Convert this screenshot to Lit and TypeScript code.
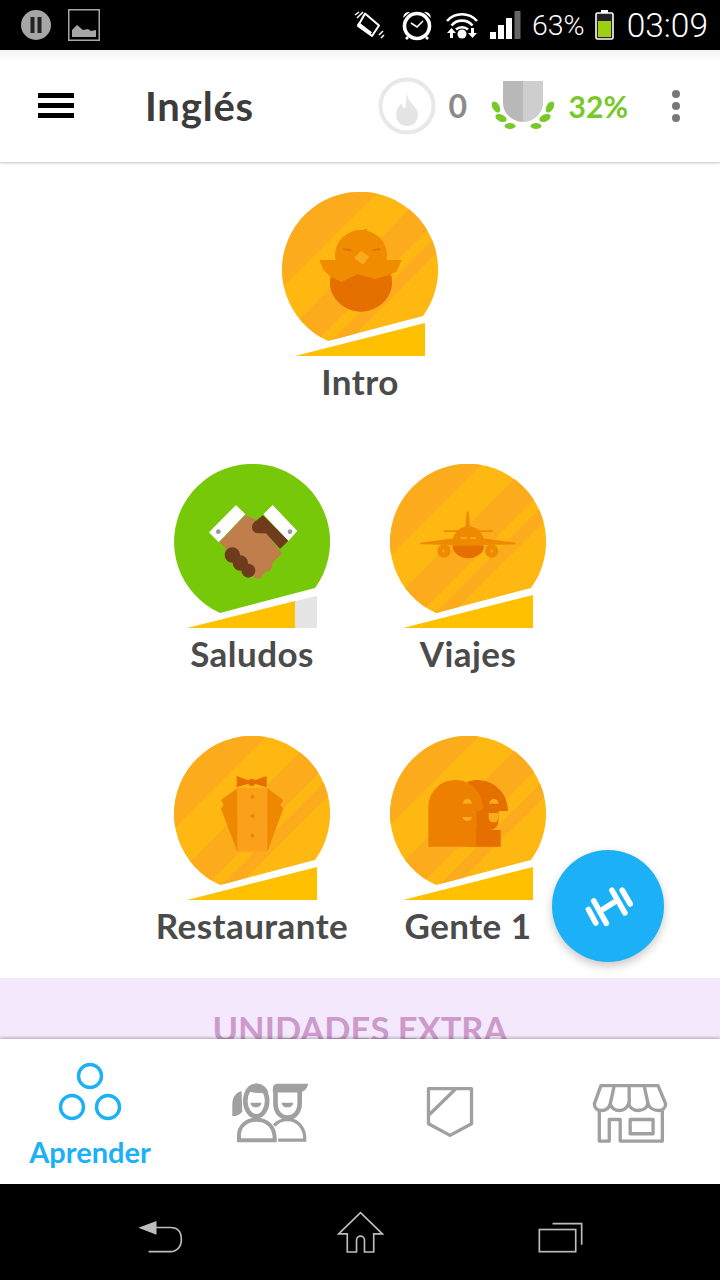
import { LitElement, html, svg, css } from "lit";
import { customElement, property } from "lit/decorators.js";

// icon drawings use the coordinates of a 3x crop, scaled down by the group transform
const chick = svg`<g transform="scale(.3333) translate(-66 -36)">
  <g fill="#f08c00">
    <path d="M288 148l12 8 20-11 2 18h-36z"/>
    <ellipse cx="303" cy="225" rx="78" ry="75"/>
    <path d="M178 240H425L410 275L393 283L345 297L293 283L245 305L212 290L190 270Z"/>
  </g>
  <path fill="#e56f00" d="M212 290l33 15 48-22 52 14 48-14c3 10 3 18 3 27 0 44-42 85-93 85s-93-41-93-85c0-7 0-13 2-20z"/>
  <path fill="#fba91f" d="M303 212l24 18-18 24-26-20z"/>
  <path fill="#e56f00" d="M250 204l24 4v6l-24-3zM362 204l-24 4v6l24-3z"/>
</g>`;

const handshake = svg`<g transform="scale(.3333) translate(-42 -27)">
  <path fill="#fff" d="M147 232l81-82 28 28-80 84zM310 178l28-28 74 78-27 30z"/>
  <circle cx="175" cy="230" r="7" fill="#999"/><circle cx="390" cy="230" r="7" fill="#999"/>
  <path fill="#bf7e4b" d="M178 262l78-82 34 16 76 100-26 24-8 26-16 6-16 20-16-4-60-62z"/>
  <path fill="#6f3b1d" d="M309 181l76 76-25 25-42-47h-24a18 18 0 0 1-18-18c0-8 4-14 10-18z"/>
  <circle cx="217" cy="300" r="23" fill="#6f3b1d"/><circle cx="241" cy="324" r="23" fill="#6f3b1d"/><circle cx="265" cy="347" r="21" fill="#6f3b1d"/>
</g>`;

const plane = svg`<g transform="scale(.3333) translate(-45 -27)">
  <g fill="#ee8a00">
    <path d="M275 170h6l4 48h-14z"/>
    <path d="M207 226h146v5H207z"/>
    <path d="M135 263l103-13h84l100 13v5l-102 2h-80l-105-2z"/>
    <circle cx="207" cy="288" r="20"/><circle cx="350" cy="288" r="20"/>
    <circle cx="280" cy="261" r="47"/>
  </g>
  <path fill="#e56f00" d="M233 272h94a47 38 0 0 1-94 0z"/>
  <path fill="#fba91f" d="M257 247h18v5h-18zM285 247h18v5h-18zM200 288l8-6v12zM356 288l-8-6v12z"/>
</g>`;

const tuxedo = svg`<g transform="scale(.3333) translate(-42 -33)">
  <rect x="232" y="188" width="90" height="192" fill="#fba01b"/>
  <path fill="#ee8800" d="M232 190l-49 35 8 14-8 12 49 129zM322 190l48 35-9 14 9 12-48 129z"/>
  <path fill="#e56f00" d="M230 153l40 14h10l40-14v34l-40-12h-10l-40 12z"/>
  <circle cx="275" cy="172" r="11" fill="#e56f00"/>
  <circle cx="277" cy="215" r="6" fill="#ee8800"/><circle cx="277" cy="273" r="6" fill="#ee8800"/><circle cx="277" cy="332" r="6" fill="#ee8800"/>
</g>`;

const people = svg`<g transform="scale(.3333) translate(-30 -33)">
  <path fill="#e56f00" d="M262 170c14-5 26-6 36-5 50 4 86 44 86 93h-28v25c0 18-8 30-22 32h28v50h-100z"/>
  <path fill="#ee8000" d="M145 365V250c0-50 36-85 80-85 46 0 80 32 85 85l-20 16v44h-2v55z"/>
  <path fill="#fba91f" d="M248 236a14 14 0 0 1 28 0zM328 236a14 14 0 0 1 28 0zM248 276h28a14 12 0 0 1-28 0zM326 264h30v16a15 12 0 0 1-30 0z"/>
  <path fill="#e56f00" d="M290 258h18l-18 32z"/>
</g>`;

interface Skill {
  name: string;
  icon: unknown;
  bg?: string;
  bands: [number, number][];
  done?: boolean;
}

const rows: Skill[][] = [
  [{ name: "Intro", icon: chick, bands: [[-10, 96], [144, 184], [198, 216]] }],
  [
    { name: "Saludos", icon: handshake, bg: "#78c80a", bands: [], done: true },
    { name: "Viajes", icon: plane, bands: [[-10, 92], [139, 180], [194, 212]] },
  ],
  [
    { name: "Restaurante", icon: tuxedo, bands: [[-10, 93], [142, 182], [196, 214]] },
    { name: "Gente 1", icon: people, bands: [[-10, 89], [139, 180], [198, 216]] },
  ],
];

@customElement("skill-node")
class SkillNode extends LitElement {
  @property({ attribute: false })
  skill!: Skill;

  static styles = css`
    :host {
      display: flex;
      flex-direction: column;
      align-items: center;
      width: 216px;
    }
    svg {
      display: block;
    }
    .label {
      font: 700 35px/50px Lato, sans-serif;
      letter-spacing: 0.45px;
      color: #4b4b4b;
      white-space: nowrap;
    }
  `;

  render() {
    const s = this.skill;
    const id = `clip-${s.name.replace(/\W/g, "")}`;
    return html`<svg width="156" height="164" viewBox="0 0 156 164">
        <clipPath id=${id}>
          <path d="M46 149L141 124A78 78 0 1 0 46 149Z" />
        </clipPath>
        <g clip-path="url(#${id})">
          <rect width="156" height="164" fill=${s.bg ?? "#ffb812"} />
          ${s.bands.map(
            ([a, b]) =>
              svg`<polygon fill="#fcab1c" points="${a},0 ${b},0 0,${b} 0,${a}" />`
          )}
        </g>
        ${s.icon}
        ${s.done
          ? svg`<polygon fill="#ffc000" points="13,164 121,137 121,164" />
              <polygon fill="#e5e5e5" points="121,137 143,132 143,164 121,164" />`
          : svg`<polygon fill="#ffc000" points="13,164 143,131 143,164" />`}
      </svg>
      <div class="label">${s.name}</div>`;
  }
}

@customElement("app-root")
class AppRoot extends LitElement {
  static styles = css`
    :host {
      display: block;
      width: 720px;
      height: 1280px;
      overflow: hidden;
      font-family: Lato, sans-serif;
    }
    svg {
      display: block;
      flex: none;
    }
    .page {
      display: flex;
      flex-direction: column;
      height: 1280px;
      background: #fff;
    }

    .status {
      display: flex;
      align-items: center;
      height: 50px;
      flex: none;
      background: #000;
      padding: 0 12px 0 21px;
      color: #fff;
      font: 300 30px Roboto, sans-serif;
    }
    .status .gap-left {
      margin-left: 17px;
    }
    .status .vibrate {
      margin-left: auto;
    }
    .status .m-alarm {
      margin-left: 16px;
    }
    .status .m-wifi {
      margin-left: 13px;
    }
    .status .m-signal {
      margin-left: 12px;
    }
    .status .pct {
      margin-left: 11px;
      font-size: 28.5px;
    }
    .status .batt {
      margin-left: 10px;
    }
    .status .clock {
      margin-left: 13px;
      font-size: 33.5px;
    }

    .header {
      display: flex;
      align-items: center;
      height: 113px;
      flex: none;
      box-sizing: border-box;
      padding: 0 38px 1px;
      background: linear-gradient(#f4f4f4, #fff 12px);
      border-bottom: 1px solid #d8d8d8;
      box-shadow: 0 1px 2px rgba(0, 0, 0, 0.12);
      position: relative;
      z-index: 1;
    }
    .burger {
      display: flex;
      flex-direction: column;
      gap: 5.2px;
      width: 36px;
    }
    .burger i {
      display: block;
      height: 4.6px;
      background: #000;
    }
    .title {
      margin-left: 71px;
      font: 700 40px Lato, sans-serif;
      letter-spacing: 0.8px;
      color: #3c3c3c;
    }
    .streak {
      margin-left: auto;
    }
    .count {
      margin-left: 13px;
      width: 18px;
      font: 700 32px Lato, sans-serif;
      color: #8a8a8a;
    }
    .crown {
      margin-left: 25px;
    }
    .pct-green {
      margin-left: 15px;
      font: 700 30px Lato, sans-serif;
      color: #78c828;
    }
    .dots {
      margin-left: 44px;
      margin-right: 2px;
    }

    .main {
      flex: 1;
      min-height: 0;
      overflow: hidden;
      position: relative;
    }
    .tree {
      display: flex;
      flex-direction: column;
      gap: 58px;
      padding: 29px 0 28px;
    }
    .row {
      display: flex;
      justify-content: center;
    }
    .extra {
      height: 61px;
      padding-top: 28px;
      background: #f3e8fc;
      text-align: center;
      font: 700 34.5px/46px Lato, sans-serif;
      color: #cc9acb;
    }
    .fab {
      position: absolute;
      left: 552px;
      top: 687px;
      width: 112px;
      height: 112px;
      border-radius: 50%;
      background: #1cb0f6;
      box-shadow: 0 4px 10px rgba(0, 0, 0, 0.22);
      display: flex;
      align-items: center;
      justify-content: center;
    }

    .nav {
      display: flex;
      height: 145px;
      flex: none;
      background: #fff;
      box-shadow: 0 -1px 3px rgba(0, 0, 0, 0.3);
      position: relative;
    }
    .tab {
      flex: 1;
      display: flex;
      flex-direction: column;
      align-items: center;
      padding-top: 43px;
    }
    .tab.active {
      padding-top: 22px;
    }
    .tab.shield {
      padding-top: 46px;
    }
    .tab-label {
      margin-top: 13px;
      font: 700 29px Lato, sans-serif;
      color: #1cb0f6;
    }

    .system {
      height: 96px;
      flex: none;
      background: #000;
      display: grid;
      grid-template-columns: repeat(3, 200px);
      justify-content: center;
      align-items: center;
      justify-items: center;
    }
  `;

  private statusBar() {
    return html`<div class="status">
      <svg width="30" height="30" viewBox="0 0 30 30">
        <circle cx="15" cy="15" r="15" fill="#a6a6a6" />
        <rect x="9.5" y="7" width="4" height="16" fill="#222" />
        <rect x="16.5" y="7" width="4" height="16" fill="#222" />
      </svg>
      <svg class="gap-left" width="32" height="32" viewBox="0 0 32 32">
        <rect x=".75" y=".75" width="30.5" height="30.5" fill="none" stroke="#a6a6a6" stroke-width="1.5" />
        <path fill="#a6a6a6" d="M4 28V21l5-5 6 5 5-1 3 2 5-1v7z" />
      </svg>
      <svg class="vibrate" width="31" height="30" viewBox="0 0 31 30" fill="none" stroke="#fff">
        <path stroke-width="2" d="M11 3.5l14 12-7 10.5-14-10z" stroke-linejoin="round" />
        <path stroke-width="3" d="M4 13.5l13 10" />
        <path stroke-width="1.5" d="M1 5l4-3M3 8l6-6M25 25l4-4M27 28l3-3" />
      </svg>
      <svg class="m-alarm" width="32" height="32" viewBox="0 0 32 32" fill="none" stroke="#fff">
        <circle cx="16" cy="17" r="12.5" stroke-width="3.6" />
        <path stroke-width="1.6" d="M10 14l6 4 6-6" />
        <path fill="#fff" stroke="none" d="M2 9a6 6 0 0 1 7-6zM30 9a6 6 0 0 0-7-6z" />
        <path stroke-width="2.6" d="M7 28l-2 2M25 28l2 2" />
      </svg>
      <svg class="m-wifi" width="32" height="28" viewBox="0 0 32 28">
        <g fill="none" stroke="#fff" stroke-width="2.6">
          <path d="M1 10C9 1 23 1 31 10" />
          <path d="M5.5 14.5C11 8 21 8 26.5 14.5" />
          <path d="M10 18.5c3-3 9-3 12 0" />
        </g>
        <circle cx="16" cy="23" r="4.5" fill="#fff" />
        <path fill="#fff" d="M1 22l4.5-5 4.5 5H7v5H4v-5zM22 22h3v-5h3v5h3l-4.5 5z" />
      </svg>
      <svg class="m-signal" width="31" height="28" viewBox="0 0 31 28">
        <rect y="21" width="6" height="7" fill="#fff" />
        <rect x="8" y="14" width="6" height="14" fill="#fff" />
        <rect x="16" y="7" width="6" height="21" fill="#fff" />
        <rect x="24.5" y="0" width="6" height="28" fill="#666" />
      </svg>
      <span class="pct">63%</span>
      <svg class="batt" width="19" height="30" viewBox="0 0 19 30">
        <rect x="1" y="3" width="17" height="26" rx="1.5" fill="#222" stroke="#fff" stroke-width="1.6" />
        <rect x="6" y="0" width="7" height="3" fill="#fff" />
        <rect x="3" y="11" width="13" height="16" fill="#9ecf10" />
      </svg>
      <span class="clock">03:09</span>
    </div>`;
  }

  private headerBar() {
    return html`<div class="header">
      <div class="burger"><i></i><i></i><i></i></div>
      <div class="title">Inglés</div>
      <svg class="streak" width="58" height="58" viewBox="0 0 58 58">
        <circle cx="29" cy="29" r="26.5" fill="none" stroke="#e8e8e8" stroke-width="4" />
        <path fill="#e5e5e5" d="M29 14c0 6 1 8 6 14 3 3 5 6 5 10a11 11 0 0 1-22 0c0-5 2-9 6-12 0 3 1 5 3 5 2-6 1-12 2-17z" />
      </svg>
      <div class="count">0</div>
      <svg class="crown" width="62" height="50" viewBox="0 0 62 50">
        <path fill="#b8b8b8" d="M11 0h20v41C20 41 11 32 11 22z" />
        <path fill="#cecece" d="M31 0h20v22c0 10-9 19-20 19z" />
        <g fill="#78c828">
          <ellipse cx="4" cy="26" rx="3.5" ry="6" transform="rotate(-30 4 26)" />
          <ellipse cx="9" cy="37" rx="6" ry="3.5" transform="rotate(25 9 37)" />
          <ellipse cx="18" cy="45" rx="5.5" ry="3" />
          <ellipse cx="44" cy="45" rx="5.5" ry="3" />
          <ellipse cx="53" cy="37" rx="6" ry="3.5" transform="rotate(-25 53 37)" />
          <ellipse cx="58" cy="26" rx="3.5" ry="6" transform="rotate(30 58 26)" />
        </g>
      </svg>
      <div class="pct-green">32%</div>
      <svg class="dots" width="8" height="32" viewBox="0 0 8 32" fill="#777">
        <circle cx="4" cy="4" r="4" /><circle cx="4" cy="16" r="4" /><circle cx="4" cy="28" r="4" />
      </svg>
    </div>`;
  }

  private navBar() {
    return html`<div class="nav">
      <div class="tab active">
        <svg width="64" height="60" viewBox="0 0 64 60" fill="none" stroke="#1cb0f6" stroke-width="3.4">
          <circle cx="32" cy="15" r="11.5" />
          <circle cx="14" cy="46" r="11.5" />
          <circle cx="50" cy="46" r="11.5" />
        </svg>
        <div class="tab-label">Aprender</div>
      </div>
      <div class="tab">
        <svg width="78" height="61" viewBox="690 335 235 183">
          <g fill="none" stroke="#a0a0a0">
            <ellipse cx="766" cy="392" rx="33" ry="46" stroke-width="14" />
            <path stroke-width="12" d="M714 510v-14c0-28 22-48 53-48s55 20 55 62z" />
            <path stroke-width="14" d="M824 360v38c0 28 16 44 36 44s37-16 37-44v-38" />
            <path stroke-width="10" d="M832 510h80c2-36-20-62-52-62-16 0-30 6-40 18" />
          </g>
          <g fill="#a0a0a0">
            <path d="M733 362c6-14 20-22 34-22 16 0 30 10 36 26-18 4-46 2-70-4z" />
            <path d="M722 362c-18 4-28 20-28 40v36c14 0 24-6 30-14z" />
            <path d="M816 362v-8c0-8 6-14 16-14h90c-2 18-14 26-30 26h-76z" />
            <path d="M748 397h34c-2 10-8 14-17 14s-15-4-17-14zM842 397h36c-2 10-8 14-18 14s-16-4-18-14z" />
          </g>
        </svg>
      </div>
      <div class="tab shield">
        <svg width="50" height="53" viewBox="195 345 150 160" fill="none" stroke="#a0a0a0" stroke-width="10" stroke-linejoin="round">
          <path d="M205 356h130v106l-65 35-65-35zM286 358l-78 76" />
        </svg>
      </div>
      <div class="tab">
        <svg width="78" height="62" viewBox="690 335 235 185" fill="none" stroke="#a0a0a0" stroke-width="10" stroke-linejoin="round">
          <path d="M720 345h172l23 55c0 12-10 20-22 20-14 0-27-8-31-20-4 12-16 20-30 20s-24-8-29-20c-5 12-15 20-28 20s-23-8-27-20c-4 12-14 20-26 20-14 0-22-8-22-20z" />
          <path d="M748 400l12-55M805 400v-55M862 400l-12-55" />
          <path d="M715 420v92h30v-65h33v65h127v-92" />
          <rect x="808" y="447" width="69" height="43" />
        </svg>
      </div>
    </div>`;
  }

  render() {
    return html`<div class="page">
      ${this.statusBar()} ${this.headerBar()}
      <div class="main">
        <div class="tree">
          ${rows.map(
            (row) => html`<div class="row">
              ${row.map((s) => html`<skill-node .skill=${s}></skill-node>`)}
            </div>`
          )}
        </div>
        <div class="extra">UNIDADES EXTRA</div>
        <div class="fab">
          <svg width="55" height="43" viewBox="600 480 165 130" fill="none" stroke="#fff" stroke-width="17" stroke-linecap="round">
            <path d="M622 554l22 41M638 528l38 68M668 552l32-20M693 496l39 68M724 496l24 41" />
          </svg>
        </div>
      </div>
      ${this.navBar()}
      <div class="system">
        <svg width="47" height="43" viewBox="110 60 140 130" fill="none" stroke="#bdbdbd" stroke-width="5">
          <path fill="#bdbdbd" stroke="none" d="M113 111l55-21v42z" />
          <path d="M165 110h45c20 0 33 12 33 36 0 22-13 37-33 37h-66" />
        </svg>
        <svg width="47" height="43" viewBox="710 60 140 130" fill="none" stroke="#bdbdbd" stroke-width="5">
          <path d="M714 129l66-64 66 64h-26v55h-28v-36a12 12 0 0 0-24 0v36h-28v-55z" />
        </svg>
        <svg width="47" height="43" viewBox="1310 60 140 130" fill="none" stroke="#bdbdbd" stroke-width="5">
          <rect x="1316" y="116" width="110" height="67" />
          <path d="M1356 98h88v64" />
        </svg>
      </div>
    </div>`;
  }
}
